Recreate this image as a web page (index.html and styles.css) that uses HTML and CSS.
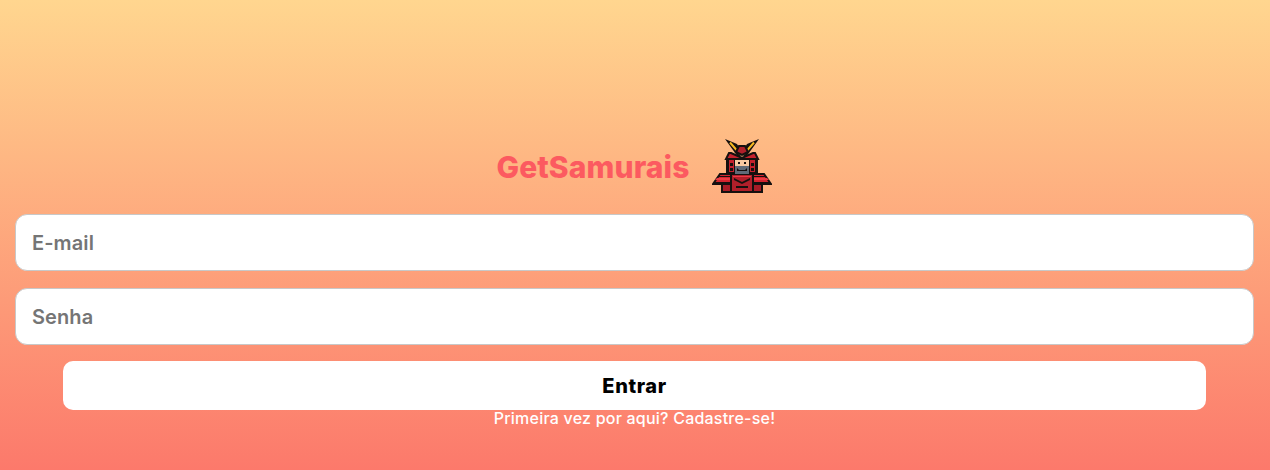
FILE: index.html
```html
<!DOCTYPE html>
<html lang="pt-BR">
<head>
<meta charset="utf-8">
<title>GetSamurais</title>
<link rel="stylesheet" href="styles.css">
</head>
<body>
<main class="login">
  <header class="brand">
    <h1 class="brand-name">GetSamurais</h1>
    <svg class="brand-logo" viewBox="0 0 60 54" width="60" height="54" aria-hidden="true">
      <g stroke="#16100f" stroke-width="2" stroke-linejoin="miter">
        <!-- shoulder guards -->
        <path fill="#d3242f" d="M8 35H20V45H1z"/>
        <path fill="#d3242f" d="M52 35H40V45H59z"/>
        <path fill="#a81c27" d="M10 45H20V53H10zM40 45H50V53H40z"/>
        <!-- body -->
        <path fill="#b01f2a" d="M19 33H41V53H19z"/>
        <!-- head -->
        <path fill="#16100f" d="M15 19H45V35H15z"/>
        <path fill="#c4212d" d="M16 20H23V34H16zM37 20H44V34H37z"/>
      </g>
      <!-- horns -->
      <path fill="#16100f" d="M13 0 25 5 31 15 26 18zM47 0 35 5 29 15 34 18z"/>
      <path fill="none" stroke="#f5b81f" stroke-width="2" d="M18 3.5 28 15M42 3.5 32 15"/>
      <g stroke="#16100f" stroke-width="2" stroke-linejoin="miter">
        <!-- helmet -->
        <path fill="#b01f2a" d="M24 13 27 7H33L36 13 30 16z"/>
        <path fill="#c4212d" d="M19 14 30 19 41 14H43L46 20H14L17 14z"/>
      </g>
      <g stroke="none">
        <path fill="#16100f" d="M18 24H21V27H18zM18 29H21V32H18zM39 24H42V27H39zM39 29H42V32H39z"/>
        <path fill="#f6c9a2" d="M23 21H37V27H23z"/>
        <path fill="#5f6b78" d="M23 27H37V35H23z"/>
        <path fill="#16100f" d="M26 23H28V25H26zM32 23H34V25H32zM25 29 27 31H33L35 29V32H25z"/>
        <path fill="#ec3a44" d="M5 39H18V41H3zM55 39H42V41H57zM21 37H39V38H21z"/>
        <path fill="#16100f" d="M22 39 30 43 38 39V41L30 45 22 41zM24 47H36V49H24zM2 43H19V44H2zM41 43H58V44H41zM7 37H19V38H7zM41 37H53V38H41z"/>
      </g>
    </svg>
  </header>
  <form class="form">
    <input class="field" type="email" placeholder="E-mail">
    <input class="field" type="password" placeholder="Senha">
    <button class="submit" type="button">Entrar</button>
  </form>
  <a class="signup" href="#">Primeira vez por aqui? Cadastre-se!</a>
</main>
</body>
</html>
```
FILE: styles.css
```css
* { box-sizing: border-box; }
html, body { height: 100%; }
body {
  margin: 0;
  min-height: 470px;
  overflow: hidden;
  background: linear-gradient(180deg, #ffd68f 0%, #fc796b 100%);
  font-family: "Inter", "Liberation Sans", sans-serif;
}
.login { display: flex; flex-direction: column; align-items: center; padding: 139px 16px 0 15px; }
.brand { display: flex; align-items: center; justify-content: center; gap: 22px; height: 54px; padding-right: 1px; }
.brand-name { margin: 0; padding-top: 2px; font-size: 30px; font-weight: 800; color: #fc5a60; letter-spacing: 0.12px; line-height: 52px; }
.brand-logo { display: block; }
.form { width: 100%; display: flex; flex-direction: column; align-items: center; margin-top: 21px; }
.field {
  display: block; width: 100%; height: 57px; margin-bottom: 17px; padding: 0 16px;
  background: #fff; border: 1px solid #c8c8c8; border-radius: 12px;
  font: 600 20px "Inter", "Liberation Sans", sans-serif; letter-spacing: 0.1px; color: #333; outline: none;
}
.field:last-of-type { margin-bottom: 16px; }
.field::placeholder { color: #757575; opacity: 1; }
.submit {
  width: 1143px; height: 49px; padding: 0; background: #fff; border: 0; border-radius: 10px;
  font: 800 20px "Inter", "Liberation Sans", sans-serif; letter-spacing: 0.6px; color: #000;
}
.signup { margin-top: -1px; color: #fff; text-decoration: none; font-size: 16px; font-weight: 500; letter-spacing: 0.22px; line-height: 18px; }
```
